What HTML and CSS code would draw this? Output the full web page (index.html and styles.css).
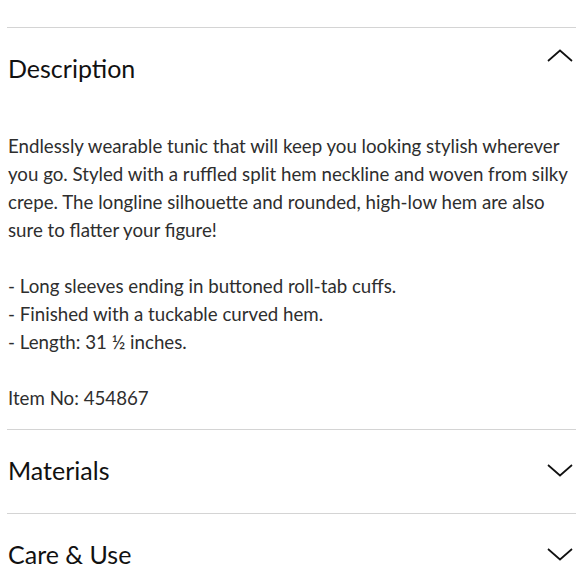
FILE: index.html
```html
<!DOCTYPE html>
<html>
<head>
<meta charset="utf-8">
<link rel="stylesheet" href="styles.css">
</head>
<body>
<div class="accordion">
  <section class="panel open">
    <div class="panel-head">
      <h2 class="panel-title">Description</h2>
      <svg class="chev chev-up" width="26" height="13" viewBox="0 0 26 13"><path d="M1 12 L13 1.5 L25 12" fill="none" stroke="#111" stroke-width="1.7"/></svg>
    </div>
    <div class="panel-body">
      <p>Endlessly wearable tunic that will keep you looking stylish wherever you go. Styled with a ruffled split hem neckline and woven from silky crepe. The longline silhouette and rounded, high-low hem are also sure to flatter your figure!</p>
      <p>- Long sleeves ending in buttoned roll-tab cuffs.<br>- Finished with a tuckable curved hem.<br>- Length: 31 ½ inches.</p>
      <p>Item No: 454867</p>
    </div>
  </section>
  <section class="panel">
    <div class="panel-head">
      <h2 class="panel-title">Materials</h2>
      <svg class="chev" width="26" height="13" viewBox="0 0 26 13"><path d="M1 1 L13 11.5 L25 1" fill="none" stroke="#111" stroke-width="1.7"/></svg>
    </div>
  </section>
  <section class="panel">
    <div class="panel-head">
      <h2 class="panel-title">Care &amp; Use</h2>
      <svg class="chev" width="26" height="13" viewBox="0 0 26 13"><path d="M1 1 L13 11.5 L25 1" fill="none" stroke="#111" stroke-width="1.7"/></svg>
    </div>
  </section>
</div>
</body>
</html>
```
FILE: styles.css
```css
html, body {
  margin: 0;
  padding: 0;
  background: #fff;
}
body {
  font-family: "Lato", "Liberation Sans", sans-serif;
  color: #2e2e2e;
}
.accordion {
  padding: 27px 4px 0 7px;
}
.panel {
  border-top: 1px solid #d4d4d4;
}
.panel-head {
  height: 83px;
  box-sizing: border-box;
  padding-bottom: 3px;
  display: flex;
  align-items: center;
  justify-content: space-between;
  padding-left: 1px;
  padding-right: 2px;
}
.panel-title {
  margin: 0;
  font-weight: 400;
  font-size: 25px;
  color: #111;
}
.chev {
  display: block;
  margin-right: 1px;
}
.chev-up {
  margin-bottom: 25px;
}
.panel-body {
  padding: 21px 0 17px 1px;
  margin-right: -3px;
}
.panel-body p {
  margin: 0 0 28px;
  font-size: 18.7px;
  line-height: 28px;
}
.panel-body p:last-child {
  margin-bottom: 0;
}
```
